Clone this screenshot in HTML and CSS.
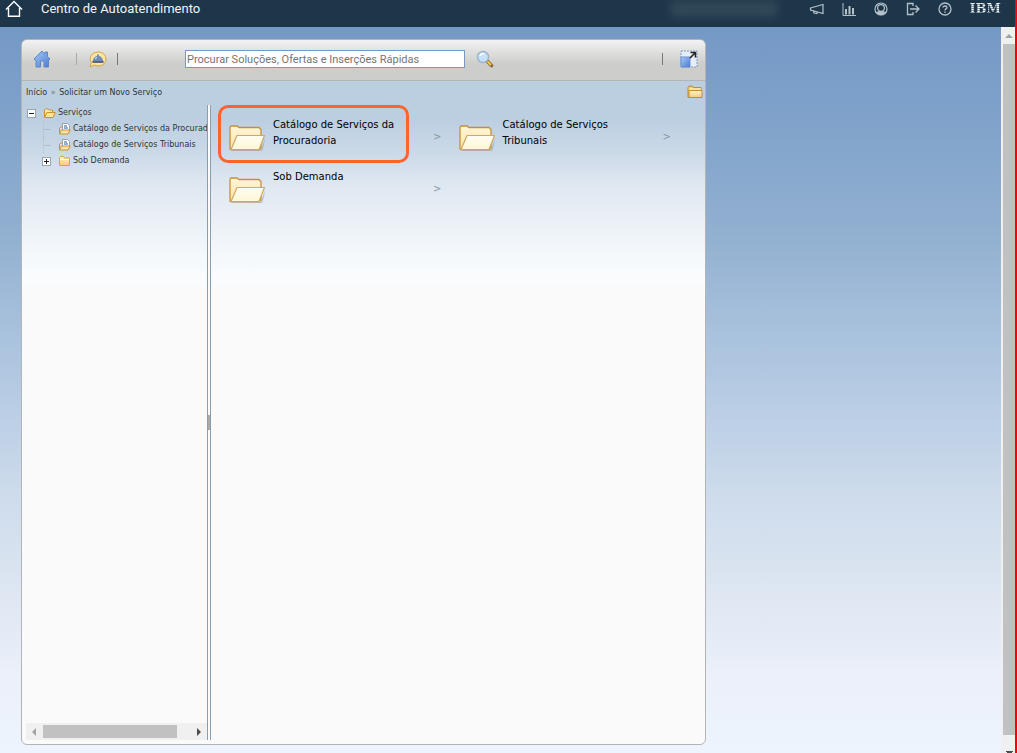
FILE: index.html
```html
<!DOCTYPE html>
<html lang="pt-BR">
<head>
<meta charset="utf-8">
<meta name="viewport" content="width=device-width, initial-scale=1">
<title>Centro de Autoatendimento</title>
<link rel="stylesheet" href="styles.css">
</head>
<body>
<svg class="defs" aria-hidden="true">
  <defs>
    <linearGradient id="paper" x1="0" y1="0" x2="0" y2="1"><stop offset="0" stop-color="#fffdf2"/><stop offset="1" stop-color="#fff7d4"/></linearGradient>
    <linearGradient id="cream" x1="0" y1="0" x2="0" y2="1"><stop offset="0" stop-color="#fff6d8"/><stop offset="1" stop-color="#fbe3a8"/></linearGradient>
    <linearGradient id="gold" x1="0" y1="0" x2="0" y2="1"><stop offset="0" stop-color="#fff3c8"/><stop offset="1" stop-color="#f5cc78"/></linearGradient>
    <linearGradient id="blue" x1="0" y1="0" x2="1" y2="1"><stop offset="0" stop-color="#a9cbf6"/><stop offset="1" stop-color="#4a79cf"/></linearGradient>
    <symbol id="folder-big" viewBox="0 0 38 30">
      <path d="M3 27L33 27L37 15L36 22L34 28H4Z" fill="#8999a8" opacity=".5"/>
      <path d="M2 26V4.500L3 3H9L11 4.500H31L33 6.500V25L31 26.500H3Z" fill="url(#cream)" stroke="#c58f3f" stroke-width="1.300"/>
      <path d="M3 26.500L9 12.500H36.500L31 26.500Z" fill="url(#paper)" stroke="#d0a763" stroke-width="1.200" stroke-linejoin="round"/>
    </symbol>
    <symbol id="folder-open" viewBox="0 0 13 12">
      <path d="M1.500 10V3L2.500 2H5L6 3H9.500V5" fill="url(#gold)" stroke="#c99137"/>
      <path d="M1.500 10.500L4 5.500H12.300L10 10.500Z" fill="#ffe3a0" stroke="#c99137" stroke-linejoin="round"/>
    </symbol>
    <symbol id="folder-doc" viewBox="0 0 13 12">
      <path d="M1.500 10V5L3 4H5" fill="url(#gold)" stroke="#c99137"/>
      <path d="M4.500 8V.500H9.500L11.500 2.500V8Z" fill="#fff" stroke="#8fa0b8"/>
      <path d="M6 3H9M6 5H10" stroke="#315d9f" stroke-width="1.200"/>
      <path d="M1.500 11L3.500 7H12.200L10 11Z" fill="#ffe3a0" stroke="#c99137" stroke-linejoin="round"/>
    </symbol>
    <symbol id="folder" viewBox="0 0 13 12">
      <path d="M1.500 10.500V2.500L2.500 1.500H5.500L6.500 3H11.500V10.500Z" fill="url(#gold)" stroke="#d9a549" stroke-linejoin="round"/>
      <path d="M2 4.500H11" stroke="#fffbe5"/>
    </symbol>
  </defs>
</svg>

<header class="topbar">
  <a class="topbar-home" href="#" aria-label="Página inicial">
    <svg width="18" height="18" viewBox="0 0 18 18" fill="none" stroke="#fff" stroke-width="1.400"><path d="M1 9.500L9 1.500L17 9.500M3.500 8V16.300H14.500V8"/></svg>
  </a>
  <h1 class="topbar-title">Centro de Autoatendimento</h1>
  <span class="topbar-user"></span>
  <nav class="topbar-tools" aria-label="Ferramentas">
    <a href="#" aria-label="Boletins"><svg width="16" height="16" viewBox="0 0 16 16" fill="none" stroke="#b4c1ca" stroke-width="1.200"><path d="M1.500 7L14 3.500V12.500L1.500 9ZM4.500 10L5 12L8 12.500V11"/></svg></a>
    <a href="#" aria-label="Relatórios"><svg width="16" height="16" viewBox="0 0 16 16" fill="none" stroke="#b4c1ca"><path d="M2 2V14.500H15"/><path d="M5 13.500V8M8.500 13.500V5M12 13.500V7" stroke-width="2"/></svg></a>
    <a href="#" aria-label="Perfil"><svg width="16" height="16" viewBox="0 0 16 16" fill="none" stroke="#b4c1ca" stroke-width="1.200"><circle cx="8" cy="8" r="6"/><circle cx="8" cy="7" r="3.400"/><path d="M3.500 11.500Q8 9.500 12.500 11.500Q8 15.500 3.500 11.500Z" fill="#b4c1ca"/></svg></a>
    <a href="#" aria-label="Sair"><svg width="16" height="16" viewBox="0 0 16 16" fill="none" stroke="#b4c1ca" stroke-width="1.300"><path d="M8 5V2.500H2.500V13.500H8V11M5 8H14M10.500 4.500L14 8L10.500 11.500"/></svg></a>
    <a href="#" aria-label="Ajuda"><svg width="16" height="16" viewBox="0 0 16 16" fill="none" stroke="#b4c1ca" stroke-width="1.300"><circle cx="8" cy="8" r="6"/><path d="M6 6.500C6 4.500 10 4.500 10 6.500C10 8 8 7.800 8 9.500M8 10.500V12"/></svg></a>
  </nav>
  <span class="brand">IBM</span>
</header>

<div class="stage">
  <main class="page">
    <section class="panel">
      <div class="toolbar">
        <div class="toolbar-left">
          <a class="tool" href="#" aria-label="Início"><svg width="18" height="18" viewBox="0 0 18 18"><path d="M1 9L9 1L12 4V2H14.500V6.500L17 9L15.500 10.200V17H11V11H7.500V17H3V10.500Z" fill="url(#blue)" stroke="#5c88c7" stroke-linejoin="round"/></svg></a>
          <span class="rule rule-light"></span>
          <a class="tool" href="#" aria-label="Serviço"><svg width="18" height="17" viewBox="0 0 18 17"><path d="M1 16L2.300 11.500C-.5 6 3 1 9 1C19.500 1 19.500 15 9 15L5 14Z" fill="#ffe6a0" stroke="#d2a343"/><path d="M3.500 10.500C4.500 6.500 6 5.500 8 5V3.500H10V5C12.500 5.500 13.500 7 14.500 10.500Z" fill="#6f8cc0"/><path d="M6 7.500L8 6.500" stroke="#e4edff"/><path d="M3.500 11H14.500" stroke="#34435e" stroke-width="1.500"/></svg></a>
          <span class="rule"></span>
        </div>
        <form class="search" role="search">
          <input class="search-input" type="text" aria-label="Procurar" placeholder="Procurar Soluções, Ofertas e Inserções Rápidas">
          <button class="search-button" type="button" aria-label="Procurar"><svg width="18" height="18" viewBox="0 0 18 18"><path d="M10.500 10.500L15.500 15.500" stroke="#876640" stroke-width="3.600" stroke-linecap="round"/><path d="M11.500 11.500L15 15" stroke="#ffc83e" stroke-width="2"/><circle cx="7" cy="7" r="5.500" fill="#c7e0fa" stroke="#9eb1c7" stroke-width="1.400"/><path d="M4 6C4.500 4 6 3.500 8 4" fill="none" stroke="#fff" stroke-width="1.500"/></svg></button>
        </form>
        <div class="toolbar-right">
          <span class="rule"></span>
          <button class="expand" type="button" aria-label="Maximizar"><svg width="18" height="18" viewBox="0 0 18 18"><path d="M1 1H17V17H1Z" fill="#e7edf7" stroke="#7f9ac4" stroke-dasharray="2 1"/><path d="M1 7H10V17H1Z" fill="url(#blue)" stroke="#6a8fd0"/><path d="M10 8L15 3M10.500 2.500H15.500V7.500" fill="none" stroke="#222" stroke-width="1.600"/></svg></button>
        </div>
      </div>

      <div class="crumbs">
        <nav aria-label="Trilha"><a href="#">Início</a> <span class="sep">»</span> <a href="#">Solicitar um Novo Serviço</a></nav>
        <button class="folder-button" type="button" aria-label="Pastas"><svg width="16" height="14" viewBox="0 0 16 14"><path d="M1 12.500V2.500L2 1H5.500L6.500 2.500H14V12.500Z" fill="#f4c673" stroke="#b68b4b"/><path d="M2 5.500H15V12.500H2Z" fill="url(#gold)" stroke="#c58c34"/><path d="M2 4H14" stroke="#fff8dc"/></svg></button>
      </div>

      <div class="columns">
        <aside class="side">
          <ul class="tree">
            <li>
              <div class="node"><button class="toggle" type="button" aria-label="Recolher Serviços"><svg width="9" height="9" viewBox="0 0 9 9"><path d="M2 4.500H7" stroke="#222"/></svg></button><svg class="node-icon" width="13" height="12"><use href="#folder-open"/></svg><a href="#">Serviços</a></div>
              <ul class="branch">
                <li class="node"><span class="line"></span><svg class="node-icon" width="13" height="12"><use href="#folder-doc"/></svg><a href="#">Catálogo de Serviços da Procurad</a></li>
                <li class="node"><span class="line"></span><svg class="node-icon" width="13" height="12"><use href="#folder-doc"/></svg><a href="#">Catálogo de Serviços Tribunais</a></li>
                <li class="node"><button class="toggle" type="button" aria-label="Expandir Sob Demanda"><svg width="9" height="9" viewBox="0 0 9 9"><path d="M2 4.500H7M4.500 2V7" stroke="#222"/></svg></button><svg class="node-icon" width="13" height="12"><use href="#folder"/></svg><a href="#">Sob Demanda</a></li>
              </ul>
            </li>
          </ul>
          <div class="hscroll"><svg width="16" height="16" viewBox="0 0 16 16"><path d="M6 8L10 4V12Z" fill="#a3a3a3"/></svg><span class="hthumb"></span><svg class="hend" width="16" height="16" viewBox="0 0 16 16"><path d="M10 8L6 4V12Z" fill="#4b4b4b"/></svg></div>
        </aside>
        <div class="splitter"><span class="grip"></span></div>
        <div class="catalog">
          <a class="card card-marked" href="#"><svg class="card-icon" width="38" height="30"><use href="#folder-big"/></svg><span class="card-name">Catálogo de Serviços da Procuradoria</span><span class="more">&gt;</span></a>
          <a class="card" href="#"><svg class="card-icon" width="38" height="30"><use href="#folder-big"/></svg><span class="card-name">Catálogo de Serviços Tribunais</span><span class="more">&gt;</span></a>
          <a class="card" href="#"><svg class="card-icon" width="38" height="30"><use href="#folder-big"/></svg><span class="card-name">Sob Demanda</span><span class="more">&gt;</span></a>
        </div>
      </div>
    </section>
  </main>
  <div class="vscroll"><svg width="14" height="17" viewBox="0 0 14 17"><path d="M4 11L8 7L12 11Z" fill="#a3a3a3"/></svg><span class="vthumb"></span><svg width="14" height="18" viewBox="0 0 14 18"><path d="M5 16H12V17H11V18H6V17H5Z" fill="#4b4b4b"/></svg></div>
</div>
</body>
</html>
```
FILE: styles.css
```css
* { box-sizing: border-box; }

body {
  margin: 0;
  min-height: 100vh;
  display: flex;
  flex-direction: column;
  border-right: 2px solid #f00;
  font-family: Verdana, "DejaVu Sans", sans-serif;
  background: #edf4fd;
}

svg { display: block; flex: none; }
a { color: inherit; text-decoration: none; }
button { padding: 0; border: 0; background: none; cursor: pointer; }
ul { list-style: none; margin: 0; padding: 0; }
.defs { position: absolute; width: 0; height: 0; }

.topbar {
  height: 27px;
  padding: 0 14px 10px 5px;
  display: flex;
  align-items: center;
  background: #1e3649;
}
.topbar-title {
  flex: 1;
  margin: 0 0 0 18px;
  font: 400 13px/18px Roboto, sans-serif;
  color: #f2f5f7;
}
.topbar-user {
  width: 108px;
  height: 16px;
  margin-right: 31px;
  border-radius: 4px;
  background: #304858;
  filter: blur(4px);
}
.topbar-tools { display: flex; gap: 16px; }
.brand {
  margin-left: 17px;
  font: 700 13px/16px "DejaVu Serif", serif;
  background: repeating-linear-gradient(#f4f7f8 0 1px, #93a1ab 1px 2px);
  -webkit-background-clip: text;
  background-clip: text;
  color: transparent;
}

.stage { flex: 1; display: flex; }
.page {
  flex: 1;
  display: flex;
  padding: 12px 20px 8px 21px;
  background: linear-gradient(#7499c5, #7ea1ca 11%, #92b0d0 29%, #a5bfdb 40%, #bccfe6 54%, #cddbeb 64%, #e0e8f3 80%, #ebf0fa 89%, #edf4fd);
}
.panel {
  flex: 0 1 685px;
  min-width: 0;
  display: flex;
  flex-direction: column;
  border: 1px solid #b2b4b6;
  border-radius: 6px;
  overflow: hidden;
  background: linear-gradient(#bccfe1 80px, #cad9e8 112px, #dde6f0 140px, #e8eef5 172px, #f5f9fc 218px, #fbfcfe 242px, #fafafa 250px);
}

.toolbar {
  height: 41px;
  display: flex;
  align-items: center;
  padding: 0 7px 2px 11px;
  border-bottom: 1px solid #b2b4b6;
  background: linear-gradient(#f2f2f2, #cdcdcb 60%);
}
.toolbar-left { display: flex; align-items: center; width: 152px; }
.rule { width: 1px; height: 12px; background: #777; }
.rule-light { margin: 0 12px 0 25px; background: #aaa; }
.toolbar-left .rule:last-child { margin-left: 10px; }
.search { flex: 1; display: flex; align-items: center; gap: 11px; }
.search-input {
  width: 280px;
  height: 18px;
  padding: 0 1px;
  border: 1px solid #7499c5;
  font: 11px Roboto, Arial, sans-serif;
}
.search-input::placeholder { color: #757575; opacity: 1; }
.toolbar-right { display: flex; align-items: center; gap: 17px; }

.crumbs {
  height: 24px;
  display: flex;
  align-items: center;
  justify-content: space-between;
  padding: 0 2px 2px 4px;
  font-size: 8px;
  color: #333;
}
.sep { margin: 0 1px; color: #777; }

.columns { flex: 1; display: flex; padding: 0 4px 4px; }
.side { width: 181px; display: flex; flex-direction: column; }
.tree { flex: 1; font-size: 8px; line-height: 16px; color: #333; }
.node { display: flex; align-items: center; height: 16px; white-space: nowrap; }
.branch { padding-left: 16px; }
.toggle {
  flex: none;
  width: 9px;
  height: 9px;
  outline: 1px solid #9ba5b0;
  outline-offset: -1px;
  background: #fff;
}
.node > .toggle { margin-left: 1px; }
.branch .toggle { margin-left: 0; }
.node-icon { margin: 0 2px 0 7px; }
.line { flex: none; width: 8px; height: 16px; margin-left: 1px; border-left: 1px dotted #b4bec9; background: linear-gradient(#b4bec9, #b4bec9) 0 8px / 8px 1px no-repeat; }

.hscroll { display: flex; align-items: center; height: 17px; background: #f0f0f0; }
.hthumb { width: 74%; height: 13px; margin-left: 1px; background: #c1c1c1; }
.hend { margin-left: auto; }

.splitter {
  width: 4px;
  display: flex;
  align-items: center;
  border: solid #8a9dad;
  border-width: 0 1px;
  background: #fbfbfb;
}
.grip { width: 2px; height: 15px; background: #aaa; }

.catalog {
  flex: 1;
  display: grid;
  grid-template-columns: 1fr 1fr;
  grid-auto-rows: 52px;
  gap: 0 16px;
  align-content: start;
  padding: 2px 30px 0 17px;
  font-size: 10px;
  line-height: 16px;
  color: #000;
}
.card { position: relative; display: flex; padding-top: 10px; }
.card-icon { margin-top: 6px; }
.card-name { width: 130px; margin-left: 7px; }
.more { margin: 12px 0 0 auto; color: #8997a6; }
.card-marked::after {
  content: "";
  position: absolute;
  inset: -2px 33px -4px -10px;
  border: 3px solid #ff632d;
  border-radius: 10px;
}

.vscroll { width: 14px; display: flex; flex-direction: column; background: #f0f0f0; }
.vthumb { flex: 1; margin-left: 2px; background: #c1c1c1; }
```
